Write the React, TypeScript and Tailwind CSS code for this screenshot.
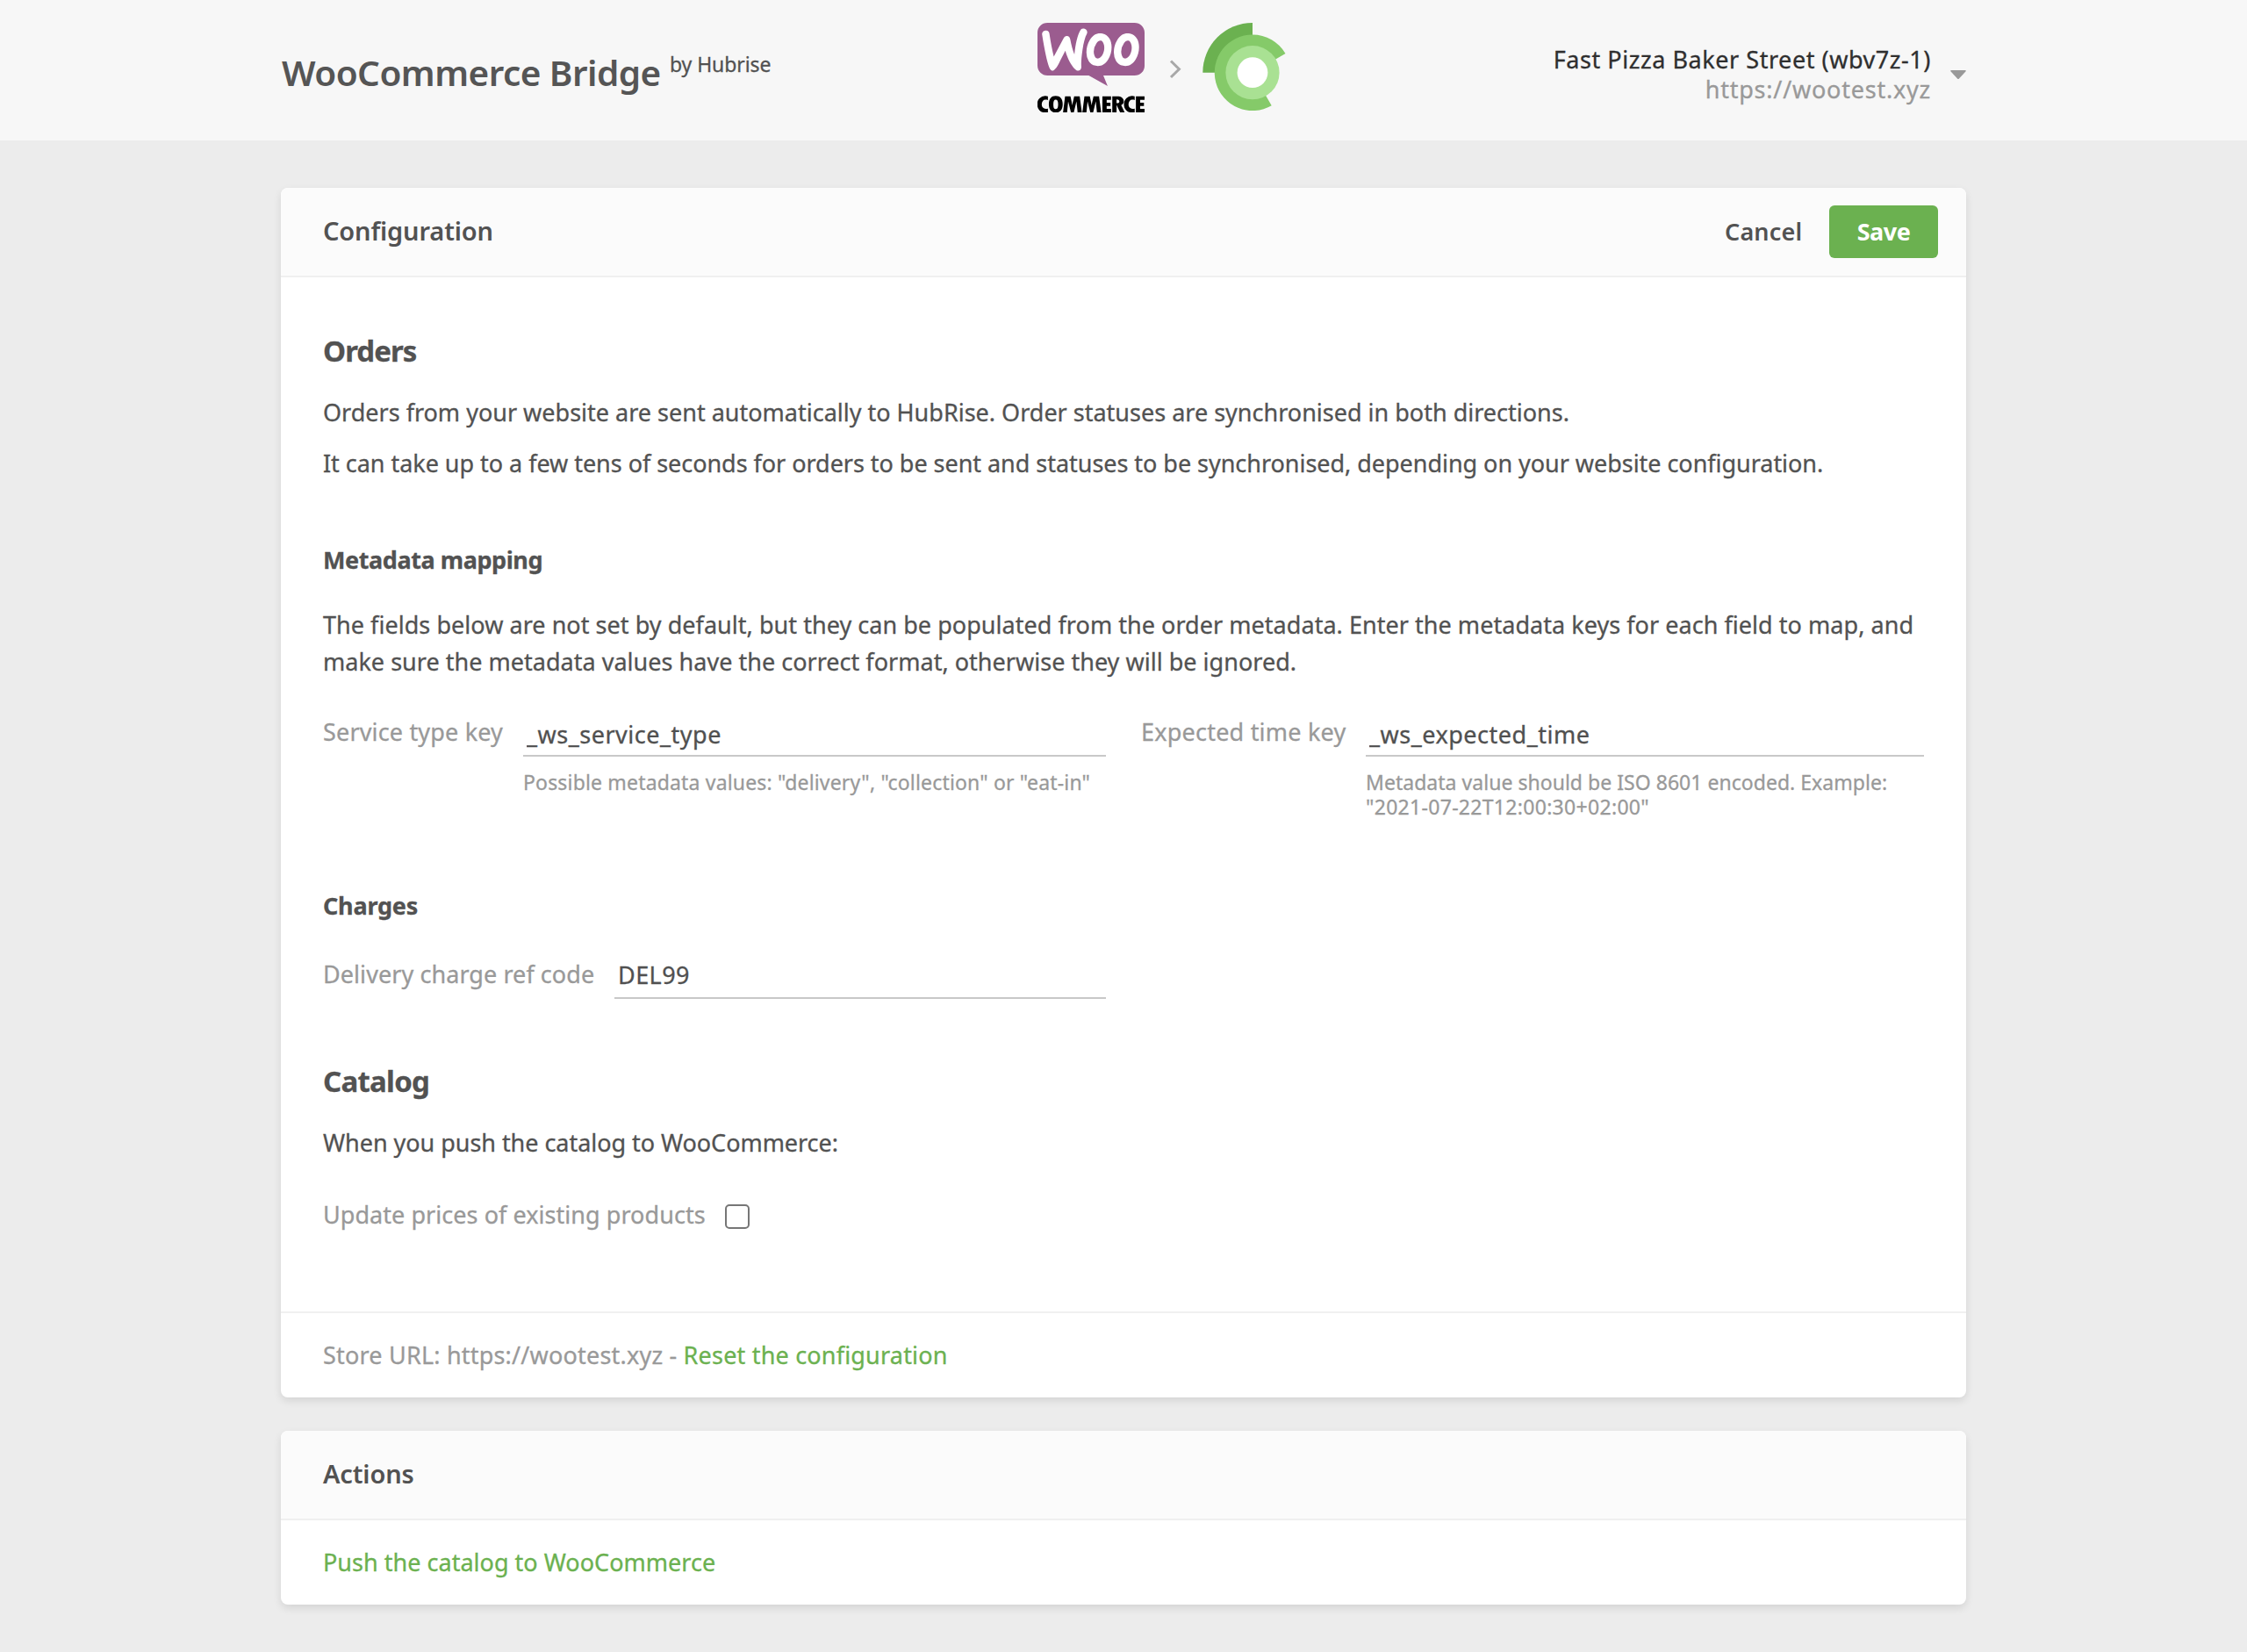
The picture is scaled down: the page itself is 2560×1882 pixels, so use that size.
import type { ReactNode } from "react";
import { SiWoocommerce } from "react-icons/si";

function WooLogo() {
  return (
    <div className="relative w-[122px]">
      <div className="absolute top-[5px] left-[5px] h-[50px] w-[112px] bg-white" />
      <SiWoocommerce
        viewBox="0 9.58 8.129 4.84"
        preserveAspectRatio="none"
        className="relative block h-[72px] w-[122px] text-[#9b5c8f]"
      />
      <SiWoocommerce
        viewBox="8.68 10.39 15.32 2.38"
        preserveAspectRatio="none"
        className="relative mt-[11px] block h-[19px] w-[122px] text-black"
      />
    </div>
  );
}

function HubriseLogo() {
  return (
    <svg className="block h-[100px] w-[95px]" viewBox="-57 -56.7 95 100">
      <path d="M-56.7 0A56.7 56.7 0 0 1 0 -56.7V0Z" fill="#6bb150" />
      <path d="M0 0L37.5 -21.7A43.3 43.3 0 0 0 0 -43.3A43.3 43.3 0 1 0 21.7 37.5Z" fill="#85ca69" />
      <circle r="30.6" fill="#a9e193" />
      <circle r="17.4" fill="#fff" />
    </svg>
  );
}

function Card({ title, actions, children }: { title: ReactNode; actions?: ReactNode; children: ReactNode }) {
  return (
    <section className="overflow-hidden rounded-[8px] bg-white shadow-[0_4px_10px_rgba(0,0,0,0.1)]">
      <div className="flex h-[102px] items-start justify-between border-b-2 border-[#f0f0f0] bg-[#fbfbfb] pr-8 pl-12">
        <h2 className="text-[29px] leading-[98px] font-semibold tracking-[-0.15px] [-webkit-text-stroke:0]">{title}</h2>
        {actions}
      </div>
      {children}
    </section>
  );
}

function Underlined({ value, className }: { value: string; className: string }) {
  return (
    <input
      readOnly
      defaultValue={value}
      className={`block w-full border-b-2 border-[#c8c8c8] bg-transparent text-[#505050] outline-none [-webkit-text-stroke:0.3px] ${className}`}
    />
  );
}

export default function App() {
  return (
    <div className="h-[1882px] w-[2560px] overflow-hidden bg-[#ececec] font-['Noto_Sans',sans-serif] text-[27px] leading-[42px] text-[#525252] [-webkit-text-stroke:0.3px]">
      <header className="h-[160px] bg-[#f7f7f7]">
        <div className="mx-auto flex w-[1920px] items-start">
          <div className="flex w-[862px] items-start pt-[55px] pl-px whitespace-nowrap">
            <h1 className="w-[442px] text-[40.5px] leading-[55px] font-semibold tracking-[-0.547px] text-[#555] [-webkit-text-stroke:0]">
              WooCommerce Bridge
            </h1>
            <span className="mt-[2px] text-[23px] leading-8 tracking-[-0.08px]">by Hubrise</span>
          </div>
          <div className="flex items-start pt-[26px]">
            <WooLogo />
            <svg className="mt-[41px] ml-[27px] h-6 w-4" viewBox="0 0 16 24" fill="none" stroke="#a8a8a8" strokeWidth="3">
              <path d="M3 2.5L12.4 11.8L3 21" />
            </svg>
            <div className="ml-[23px]">
              <HubriseLogo />
            </div>
          </div>
          <div className="ml-auto flex items-start pt-[51px]">
            <div className="text-right leading-[34px] whitespace-nowrap">
              <div className="tracking-[0.553px] text-[#2f2f2f]">Fast Pizza Baker Street (wbv7z-1)</div>
              <div className="tracking-[0.773px] text-[#999]">https://wootest.xyz</div>
            </div>
            <svg className="mt-[29px] ml-[22px] h-[11px] w-[18px]" viewBox="0 0 18 11">
              <path d="M1 0H17Q18.4 .4 17.4 1.5L10 9.6Q9 10.6 8 9.6L.6 1.5Q-.4 .4 1 0Z" fill="#999" />
            </svg>
          </div>
        </div>
      </header>

      <main className="mx-auto w-[1920px] pt-[54px]">
        <Card
          title="Configuration"
          actions={
            <div className="mt-5 flex leading-[60px] [-webkit-text-stroke:0]">
              <button className="w-[119px] text-left font-semibold tracking-[0.16px]">Cancel</button>
              <button className="w-[124px] rounded-[6px] bg-[#6bb150] text-center font-bold tracking-[-0.489px] text-white">
                Save
              </button>
            </div>
          }
        >
          <div className="px-12 pt-[61px] pb-[89px]">
            <h3 className="text-[33px] leading-[45px] font-bold tracking-[-0.94px]">Orders</h3>
            <p className="mt-[27px]">
              Orders from your website are sent automatically to HubRise. Order statuses are synchronised in both
              directions.
            </p>
            <p className="mt-4 tracking-[-0.037px] whitespace-nowrap">
              It can take up to a few tens of seconds for orders to be sent and statuses to be synchronised, depending
              on your website configuration.
            </p>

            <h4 className="mt-[68px] font-bold tracking-[-0.43px]">Metadata mapping</h4>
            <p className="mt-8 tracking-[0.04px] whitespace-nowrap">
              The fields below are not set by default, but they can be populated from the order metadata. Enter the
              metadata keys for each field to map, and
              <br />
              <span className="tracking-[0.02px]">
                make sure the metadata values have the correct format, otherwise they will be ignored.
              </span>
            </p>

            <div className="mt-[38px] grid w-[1824px] grid-cols-2 gap-x-10">
              <div className="flex">
                <label className="w-[228px] shrink-0 tracking-[0.17px] text-[#999]">Service type key</label>
                <div className="grow">
                  <Underlined value="_ws_service_type" className="h-[49px] pt-[2px] pb-[3px] pl-1 tracking-[0.518px]" />
                  <p className="mt-[15px] text-[23px] leading-7 tracking-[0.17px] text-[#999]">
                    Possible metadata values: "delivery", "collection" or "eat-in"
                  </p>
                </div>
              </div>
              <div className="flex">
                <label className="w-[256px] shrink-0 tracking-[0.219px] text-[#999]">Expected time key</label>
                <div className="grow">
                  <Underlined value="_ws_expected_time" className="h-[49px] pt-[2px] pb-[3px] pl-1 tracking-[0.517px]" />
                  <p className="mt-[15px] text-[23px] leading-7 tracking-[0.03px] text-[#999]">
                    Metadata value should be ISO 8601 encoded. Example:
                    <br />
                    <span className="tracking-[0.302px]">"2021-07-22T12:00:30+02:00"</span>
                  </p>
                </div>
              </div>
            </div>

            <h4 className="mt-[78px] font-bold tracking-[-0.223px]">Charges</h4>
            <div className="mt-9 flex w-[892px]">
              <label className="w-[332px] shrink-0 tracking-[0.07px] text-[#999]">Delivery charge ref code</label>
              <Underlined value="DEL99" className="h-[49px] pb-[5px] pl-1 tracking-[0.422px]" />
            </div>

            <h3 className="mt-[71px] text-[33px] leading-[45px] font-bold tracking-[-0.75px]">Catalog</h3>
            <p className="mt-[27px] tracking-[-0.041px]">When you push the catalog to WooCommerce:</p>
            <div className="mt-10 flex items-start">
              <label className="w-[458px] tracking-[0.05px] text-[#999]">Update prices of existing products</label>
              <input
                type="checkbox"
                className="mt-[9px] size-7 appearance-none rounded-[5px] border-2 border-[#767676] bg-white"
              />
            </div>
          </div>
          <div className="h-[98px] border-t-2 border-[#f0f0f0] px-12 pt-[27px]">
            <span className="tracking-[0.2px] text-[#999]">Store URL: https://wootest.xyz - </span>
            <a className="tracking-[0.19px] text-[#6bb150]">Reset the configuration</a>
          </div>
        </Card>

        <div className="mt-[38px]">
          <Card title="Actions">
            <div className="h-24 px-12 pt-[27px]">
              <a className="tracking-[0.02px] text-[#6bb150]">Push the catalog to WooCommerce</a>
            </div>
          </Card>
        </div>
      </main>
    </div>
  );
}
